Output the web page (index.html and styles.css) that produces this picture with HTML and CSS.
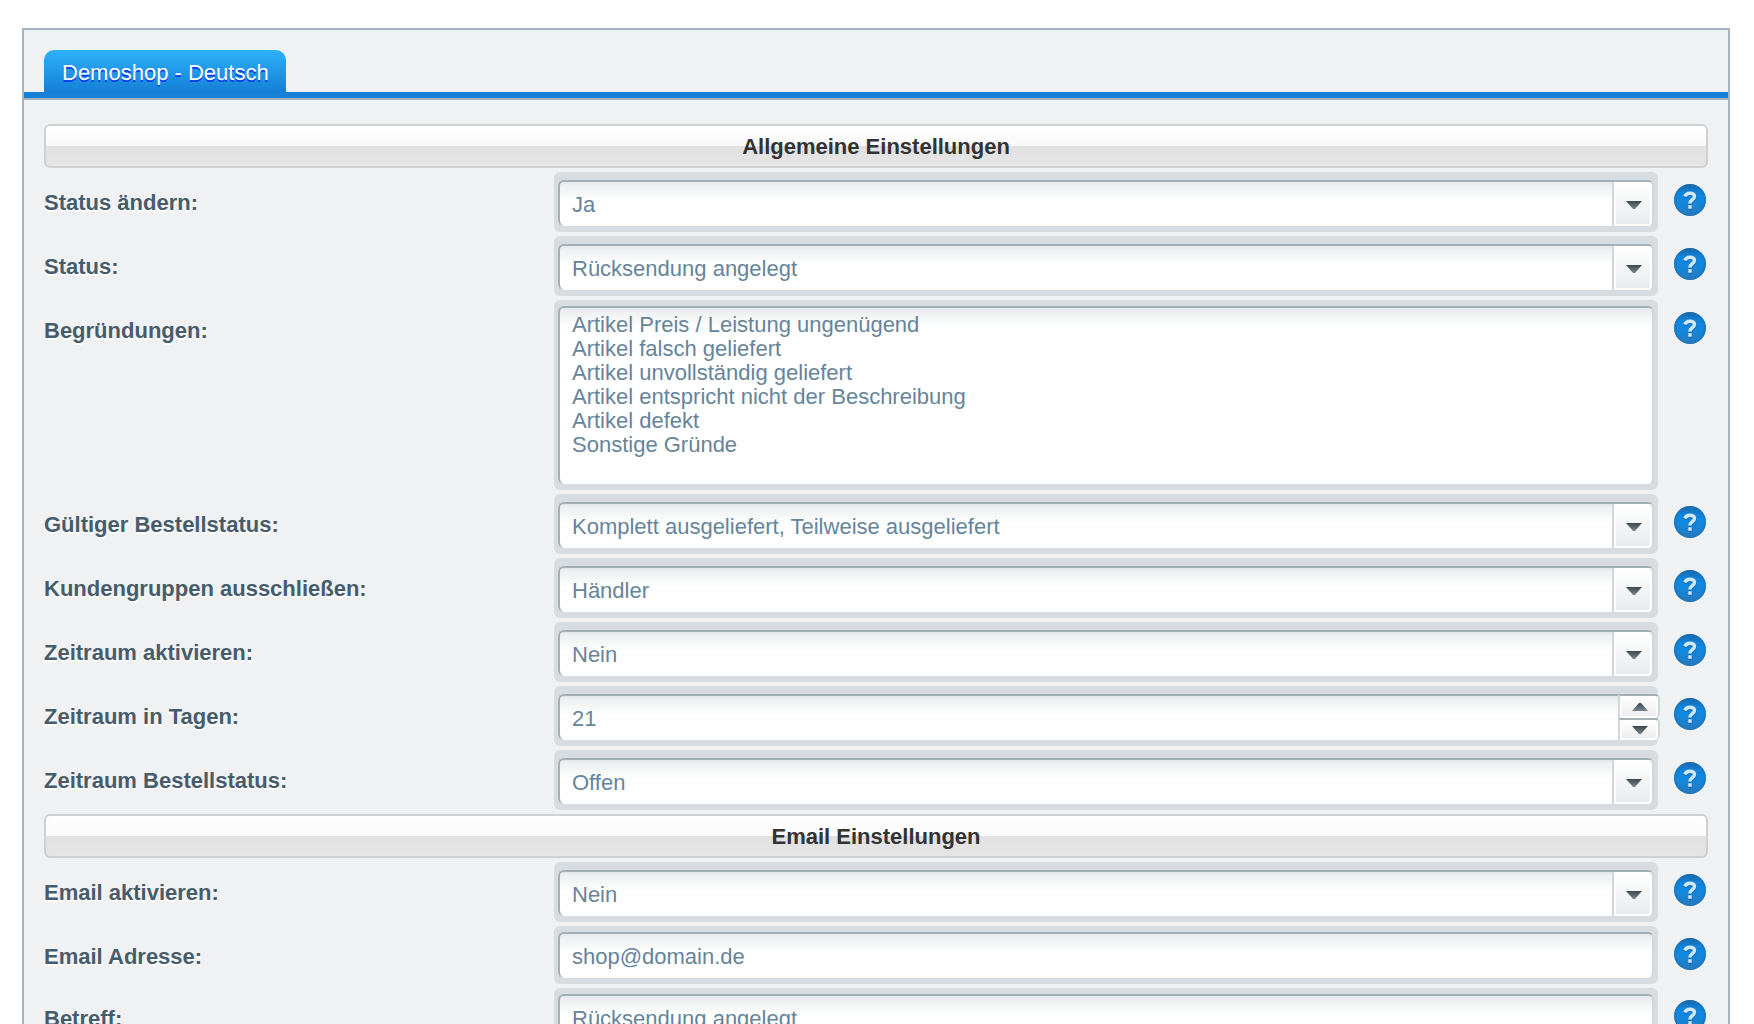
FILE: index.html
```html
<!DOCTYPE html>
<html lang="de">
<head>
<meta charset="utf-8">
<title>Demoshop - Deutsch</title>
<link rel="stylesheet" href="styles.css">
</head>
<body>
<svg class="sprite" aria-hidden="true">
  <defs>
    <linearGradient id="blue" x1="0" y1="0" x2="0" y2="1">
      <stop offset="0" stop-color="#1b64a6"/>
      <stop offset=".25" stop-color="#0f82d8"/>
      <stop offset=".5" stop-color="#1088e0"/>
      <stop offset="1" stop-color="#2a7abc"/>
    </linearGradient>
    <linearGradient id="dark" x1="0" y1="0" x2="0" y2="1">
      <stop offset="0" stop-color="#3c4850"/>
      <stop offset="1" stop-color="#7b868d"/>
    </linearGradient>
    <symbol id="help" viewBox="0 0 32 32">
      <circle cx="16" cy="16" r="16" fill="url(#blue)"/>
      <circle cx="16" cy="16" r="15" fill="none" stroke="#1f6fb4" stroke-opacity=".5" stroke-width="2"/>
      <g fill="none" stroke="#1a5f9e" stroke-opacity=".6" stroke-width="3.4">
        <path d="M11 13.500C12 9.500 20.800 9 20.800 13.500C20.800 16.800 16.500 16.500 16.500 20.500M16.500 22.500V26"/>
      </g>
      <g fill="none" stroke="#d3e6f5" stroke-width="3.4">
        <path d="M11 12.500C12 8.500 20.500 8 20.500 12.300C20.500 15.800 16 15.500 16 19.500M16 21.300V24.700"/>
      </g>
    </symbol>
    <symbol id="down" viewBox="0 0 16 8"><path d="M0 0H16L9 8H7Z" fill="url(#dark)"/></symbol>
    <symbol id="up" viewBox="0 0 16 8"><path d="M0 8H16L9 0H7Z" fill="url(#dark)"/></symbol>
  </defs>
</svg>
<main class="panel">
  <nav class="tabs"><button class="tab" type="button">Demoshop - Deutsch</button></nav>
  <form class="form">
    <h2 class="section">Allgemeine Einstellungen</h2>
    <div class="row">
      <label for="change">Status ändern:</label>
      <div class="control combo"><select id="change"><option>Ja</option></select><span class="trigger"><svg class="arrow"><use href="#down"/></svg></span></div>
      <button class="help" type="button" aria-label="Hilfe"><svg><use href="#help"/></svg></button>
    </div>
    <div class="row">
      <label for="status">Status:</label>
      <div class="control combo"><select id="status"><option>Rücksendung angelegt</option></select><span class="trigger"><svg class="arrow"><use href="#down"/></svg></span></div>
      <button class="help" type="button" aria-label="Hilfe"><svg><use href="#help"/></svg></button>
    </div>
    <div class="row">
      <label for="reasons">Begründungen:</label>
      <div class="control"><textarea id="reasons">Artikel Preis / Leistung ungenügend
Artikel falsch geliefert
Artikel unvollständig geliefert
Artikel entspricht nicht der Beschreibung
Artikel defekt
Sonstige Gründe</textarea></div>
      <button class="help" type="button" aria-label="Hilfe"><svg><use href="#help"/></svg></button>
    </div>
    <div class="row">
      <label for="valid">Gültiger Bestellstatus:</label>
      <div class="control combo"><select id="valid"><option>Komplett ausgeliefert, Teilweise ausgeliefert</option></select><span class="trigger"><svg class="arrow"><use href="#down"/></svg></span></div>
      <button class="help" type="button" aria-label="Hilfe"><svg><use href="#help"/></svg></button>
    </div>
    <div class="row">
      <label for="groups">Kundengruppen ausschließen:</label>
      <div class="control combo"><select id="groups"><option>Händler</option></select><span class="trigger"><svg class="arrow"><use href="#down"/></svg></span></div>
      <button class="help" type="button" aria-label="Hilfe"><svg><use href="#help"/></svg></button>
    </div>
    <div class="row">
      <label for="period">Zeitraum aktivieren:</label>
      <div class="control combo"><select id="period"><option>Nein</option></select><span class="trigger"><svg class="arrow"><use href="#down"/></svg></span></div>
      <button class="help" type="button" aria-label="Hilfe"><svg><use href="#help"/></svg></button>
    </div>
    <div class="row">
      <label for="days">Zeitraum in Tagen:</label>
      <div class="control combo number"><input id="days" type="text" inputmode="numeric" value="21"><span class="spinner"><button type="button" aria-label="Mehr"><svg class="arrow"><use href="#up"/></svg></button><button type="button" aria-label="Weniger"><svg class="arrow"><use href="#down"/></svg></button></span></div>
      <button class="help" type="button" aria-label="Hilfe"><svg><use href="#help"/></svg></button>
    </div>
    <div class="row">
      <label for="periodstatus">Zeitraum Bestellstatus:</label>
      <div class="control combo"><select id="periodstatus"><option>Offen</option></select><span class="trigger"><svg class="arrow"><use href="#down"/></svg></span></div>
      <button class="help" type="button" aria-label="Hilfe"><svg><use href="#help"/></svg></button>
    </div>
    <h2 class="section">Email Einstellungen</h2>
    <div class="row">
      <label for="mail">Email aktivieren:</label>
      <div class="control combo"><select id="mail"><option>Nein</option></select><span class="trigger"><svg class="arrow"><use href="#down"/></svg></span></div>
      <button class="help" type="button" aria-label="Hilfe"><svg><use href="#help"/></svg></button>
    </div>
    <div class="row">
      <label for="address">Email Adresse:</label>
      <div class="control"><input id="address" type="text" value="shop@domain.de"></div>
      <button class="help" type="button" aria-label="Hilfe"><svg><use href="#help"/></svg></button>
    </div>
    <div class="row">
      <label for="subject">Betreff:</label>
      <div class="control"><input id="subject" type="text" value="Rücksendung angelegt"></div>
      <button class="help" type="button" aria-label="Hilfe"><svg><use href="#help"/></svg></button>
    </div>
  </form>
</main>
</body>
</html>
```
FILE: styles.css
```css
* { box-sizing: border-box; }

body {
  margin: 0;
  height: 100vh;
  overflow: hidden;
  background: #fff;
  font: 22px/26px "Liberation Sans", Arial, sans-serif;
}

.sprite { position: absolute; width: 0; height: 0; }

button, input, select, textarea { font: inherit; margin: 0; }

.panel {
  margin: 28px 24px 28px 22px;
  border: 2px solid #a4b3c0;
  background: #f0f1f3;
}

.tabs {
  display: flex;
  padding: 20px 20px 0;
  border-bottom: 2px solid #a4b3c0;
  box-shadow: inset 0 -6px #1580d6;
}

.tab {
  height: 48px;
  padding: 0 17px 2px 18px;
  border: 0;
  border-radius: 10px 10px 0 0;
  background: linear-gradient(#2db1f9, #1580d6 42px);
  color: #fff;
  text-shadow: 0 2px #0b3fe6;
}

.form {
  display: flex;
  flex-direction: column;
  gap: 4px;
  padding: 24px 20px;
}

.section {
  margin: 0;
  padding: 8px 0 6px;
  border: 2px solid #d0d0d0;
  border-radius: 6px;
  background: linear-gradient(#fff, #f9f9f9 50%, #e1e1e1 50%, #e5e5e5);
  color: #333;
  font-size: 22px;
  font-weight: bold;
  text-align: center;
}

.row {
  display: grid;
  grid-template-columns: 510px 1fr 48px;
  align-items: start;
  padding-right: 2px;
}

.row label {
  padding-top: 18px;
  color: #475c6b;
  font-weight: bold;
  text-shadow: 0 2px #fff;
}

.control {
  display: grid;
  padding: 6px 4px;
  border-radius: 6px;
  background: #d6dce0;
}

.control input, .control select, .control textarea {
  display: block;
  width: 100%;
  height: 46px;
  padding: 2px 12px 0;
  border: 2px solid #a4afb6;
  border-right-color: #d0d7db;
  border-bottom: 0;
  border-radius: 6px;
  outline: 0;
  appearance: none;
  background: linear-gradient(#e2e7e9, #eef1f1 4px, #fff 20px);
  color: #66849a;
}

.control textarea {
  height: 178px;
  padding-top: 5px;
  line-height: 24px;
  resize: none;
  overflow: hidden;
}

.combo {
  grid-template-columns: 1fr 42px;
  padding-top: 8px;
}

.combo select, .combo input { grid-area: 1 / 1 / 2 / 3; }

.trigger {
  grid-area: 1 / 2;
  display: grid;
  place-items: center;
  margin-top: 2px;
  padding: 2px 0 0 2px;
  border: solid #d0d7db;
  border-width: 0 2px;
  border-radius: 0 5px 5px 0;
  background: linear-gradient(#fff, #e9eaec);
  box-shadow: inset 0 0 0 2px #fff;
  pointer-events: none;
}

.arrow { display: block; width: 16px; height: 8px; }

.number { grid-template-columns: 1fr 36px; }

.spinner {
  grid-area: 1 / 2;
  display: grid;
  grid-template-rows: 24px 22px;
  margin-right: -6px;
}

.spinner button {
  display: grid;
  place-items: center;
  padding: 0 0 0 2px;
  border: 2px solid #d0d7db;
  border-top-color: #a4afb6;
  border-bottom: 0;
  border-radius: 0 5px 5px 0;
  background: linear-gradient(#fff, #ececee);
  box-shadow: inset 0 0 0 2px #fff;
}

.help {
  width: 32px;
  height: 32px;
  margin: 12px 0 0 16px;
  padding: 0;
  border: 0;
  background: none;
}

.help svg { display: block; width: 32px; height: 32px; }
```
